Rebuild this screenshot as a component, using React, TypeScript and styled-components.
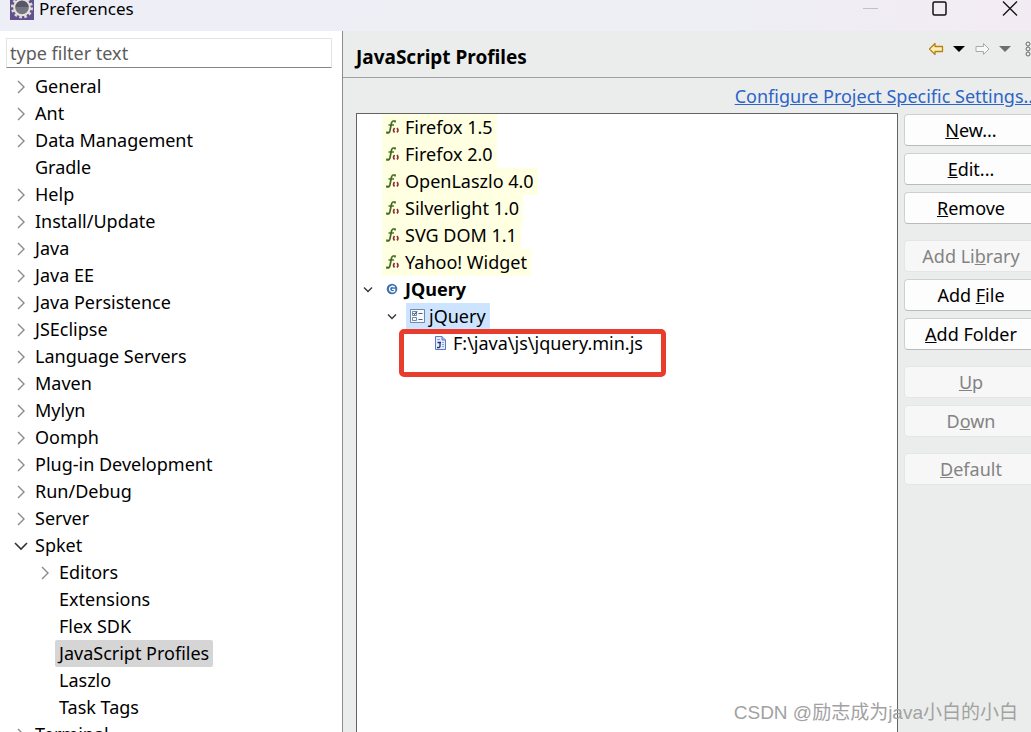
import React from 'react';
import styled, { createGlobalStyle } from 'styled-components';

const GlobalStyle = createGlobalStyle`
  *, *::before, *::after { box-sizing: border-box; }
  body { margin: 0; background: #ebedec; }
  body, button, input { font-family: "Noto Sans", "Noto Sans CJK SC", sans-serif; font-size: 18px; }
`;

const Window = styled.div`
  position: relative;
  display: flex;
  flex-direction: column;
  height: 100vh;
  overflow: hidden;
  background: #ebedec;
  color: #000;
`;

const TitleBar = styled.header`
  display: flex;
  flex: none;
  align-items: flex-start;
  height: 31px;
  padding: 0 13px 0 10px;
  overflow: hidden;
  background: linear-gradient(90deg, #eeeff6 0%, #eeeef5 70%, #f3ebf3 100%);
`;

const AppIcon = styled.svg`
  flex: none;
  width: 24px;
  height: 20px;
`;

const Title = styled.div`
  flex: 1;
  padding-left: 5px;
  font-size: 17px;
  line-height: 18px;
`;

const WindowControls = styled.div`
  display: flex;
  gap: 54px;
`;

const IconButton = styled.button`
  display: block;
  padding: 0;
  border: 0;
  background: none;
  svg { display: block; }
`;

const Body = styled.div`
  display: flex;
  flex: 1;
  min-height: 0;
`;

const Sidebar = styled.nav`
  flex: none;
  width: 343px;
  padding: 7px 10px 0 6px;
  overflow: hidden;
  border-right: 1px solid #8c8c8c;
  background: #fff;
`;

const Filter = styled.input`
  display: block;
  width: 100%;
  height: 30px;
  margin-bottom: 5px;
  padding: 0 3px;
  border: 1px solid #e3e3e3;
  border-bottom-color: #868686;
  border-radius: 1px;
  background: #fff;
  &::placeholder { color: #5c5c5c; opacity: 1; }
`;

const Tree = styled.ul`
  margin: 0;
  padding: 0;
  list-style: none;
`;

const Row = styled.li<{ $indent: number }>`
  display: flex;
  align-items: center;
  height: 27px;
  padding-left: ${(p) => p.$indent}px;
  white-space: nowrap;
`;

const Twisty = styled.svg`
  flex: none;
  width: 17px;
  height: 17px;
  fill: none;
`;

const Label = styled.span<{ $selected?: boolean }>`
  margin-left: 3px;
  padding: 0 4px;
  line-height: 27px;
  border-radius: 2px;
  background: ${(p) => (p.$selected ? '#d5d5d5' : 'transparent')};
`;

const Page = styled.main`
  display: flex;
  flex: 1;
  flex-direction: column;
  min-width: 0;
`;

const PageHeader = styled.div`
  display: flex;
  flex: none;
  align-items: center;
  justify-content: space-between;
  height: 47px;
  padding-left: 13px;
  border-bottom: 1px solid #a0a0a0;
`;

const Heading = styled.h1`
  margin: 0;
  padding-top: 6px;
  font-size: 19px;
  line-height: 27px;
`;

const HistoryTools = styled.div`
  display: flex;
  align-items: center;
  gap: 9px;
  padding-bottom: 10px;
  margin-right: -5px;
`;

const Content = styled.div`
  display: grid;
  flex: 1;
  grid-template-columns: minmax(0, 1fr) 134px;
  grid-template-rows: 35px minmax(0, 1fr);
  column-gap: 6px;
  min-height: 0;
  margin-right: -7px;
  padding-left: 13px;
`;

const SettingsLink = styled.a`
  grid-column: 1 / 3;
  justify-self: end;
  padding-top: 4px;
  color: #2c64c8;
  line-height: 28px;
  white-space: nowrap;
`;

const ProfileTree = styled(Tree)`
  border: 1px solid #646464;
  border-bottom: 0;
  background: #fff;
`;

const Profile = styled.span<{ $tone?: 'builtin' | 'selected' | 'bold' }>`
  display: flex;
  align-items: center;
  height: 27px;
  gap: 4px;
  margin-left: 7px;
  padding: 0 4px 2px;
  font-weight: ${(p) => (p.$tone === 'bold' ? 700 : 400)};
  background: ${(p) => (p.$tone === 'builtin' ? '#ffffe1' : p.$tone === 'selected' ? '#cce4ff' : 'transparent')};
`;

const FileRow = styled(Row)`
  position: relative;
`;

const Highlight = styled.div`
  position: absolute;
  top: -1px;
  left: 42px;
  width: 267px;
  height: 48px;
  border: 5px solid #e83d2c;
  border-radius: 5px;
`;

const Actions = styled.div`
  display: flex;
  flex-direction: column;
  gap: 16px;
  padding-top: 1px;
`;

const ActionGroup = styled.div`
  display: flex;
  flex-direction: column;
  gap: 7px;
`;

const ActionButton = styled.button`
  height: 32px;
  padding: 0;
  border: 1px solid #d0d0d0;
  border-bottom-color: #bababa;
  border-radius: 4px;
  background: #fdfdfd;
  color: #000;
  line-height: 28px;
  &:disabled {
    border-color: #e4e5e5;
    background: #f7f7f7;
    color: #838383;
  }
`;

const Watermark = styled.div`
  position: absolute;
  right: 13px;
  bottom: 5px;
  color: #a2a2a2;
  font-family: "Liberation Sans", "Noto Sans CJK SC", sans-serif;
  font-size: 19px;
  line-height: 28px;
`;

type TreeItem = { name: string; state?: 'open' | 'closed'; depth?: number; selected?: boolean };

const categories: TreeItem[] = [
  { name: 'General', state: 'closed' },
  { name: 'Ant', state: 'closed' },
  { name: 'Data Management', state: 'closed' },
  { name: 'Gradle' },
  { name: 'Help', state: 'closed' },
  { name: 'Install/Update', state: 'closed' },
  { name: 'Java', state: 'closed' },
  { name: 'Java EE', state: 'closed' },
  { name: 'Java Persistence', state: 'closed' },
  { name: 'JSEclipse', state: 'closed' },
  { name: 'Language Servers', state: 'closed' },
  { name: 'Maven', state: 'closed' },
  { name: 'Mylyn', state: 'closed' },
  { name: 'Oomph', state: 'closed' },
  { name: 'Plug-in Development', state: 'closed' },
  { name: 'Run/Debug', state: 'closed' },
  { name: 'Server', state: 'closed' },
  { name: 'Spket', state: 'open' },
  { name: 'Editors', state: 'closed', depth: 1 },
  { name: 'Extensions', depth: 1 },
  { name: 'Flex SDK', depth: 1 },
  { name: 'JavaScript Profiles', depth: 1, selected: true },
  { name: 'Laszlo', depth: 1 },
  { name: 'Task Tags', depth: 1 },
  { name: 'Terminal', state: 'closed' },
];

const builtins = ['Firefox 1.5', 'Firefox 2.0', 'OpenLaszlo 4.0', 'Silverlight 1.0', 'SVG DOM 1.1', 'Yahoo! Widget'];

type Action = { text: string; key: number; disabled?: boolean };

const actionGroups: Action[][] = [
  [{ text: 'New...', key: 0 }, { text: 'Edit...', key: 0 }, { text: 'Remove', key: 0 }],
  [{ text: 'Add Library', key: 6, disabled: true }, { text: 'Add File', key: 4 }, { text: 'Add Folder', key: 0 }],
  [{ text: 'Up', key: 0, disabled: true }, { text: 'Down', key: 1, disabled: true }],
  [{ text: 'Default', key: 0, disabled: true }],
];

const TreeArrow = ({ state, small }: { state?: 'open' | 'closed'; small?: boolean }) => (
  <Twisty viewBox="0 0 17 17">
    {state === 'closed' && <path d="M7 3l6 6-6 6" stroke="#8a8a8a" strokeWidth="1.4" />}
    {state === 'open' && !small && <path d="M4 6l6 6 6-6" stroke="#333" strokeWidth="1.6" />}
    {state === 'open' && small && <path d="M6 6.500l4 4 4-4" stroke="#333" strokeWidth="1.3" />}
  </Twisty>
);

const FunctionIcon = () => (
  <svg width="15" height="16" viewBox="0 0 15 16" fill="none">
    <path d="M9 3.500V2H7.200C6 2 5.700 3.200 5.300 5L4 11.500C3.600 13.200 3 14.200 1 14v-1.500" stroke="#3f6b1c" strokeWidth="1.700" />
    <path d="M2.500 6h5.500" stroke="#3f6b1c" strokeWidth="1.400" />
    <path d="M8.500 9q-2 2.300 0 4.600M11 9q2 2.300 0 4.600" stroke="#8c3030" strokeWidth="1.600" />
  </svg>
);

const GroupIcon = () => (
  <svg width="15" height="16" viewBox="0 0 15 16" fill="none">
    <circle cx="6" cy="8" r="5.300" fill="#3f73b0" />
    <path d="M8.600 6.300C7 4.500 3.500 5 3.500 8s3.500 3.500 5.100 2V8.300H6" stroke="#fff" strokeWidth="1.300" />
  </svg>
);

const LibraryIcon = () => (
  <svg width="15" height="16" viewBox="0 0 15 16" fill="none" stroke="#7188a8">
    <path d="M.5 1.500h14v13H.500z" fill="#f6faff" />
    <path d="M2.500 3.500h4v4h-4zM2.500 9.500h4v3h-4z" />
    <path d="M8.500 5.500h4M8.500 11.500h4" stroke="#4a5f80" />
    <path d="M3.500 5l1 1.500 2.500-3" stroke="#333" />
  </svg>
);

const ScriptIcon = () => (
  <svg width="15" height="16" viewBox="0 0 15 16" fill="none">
    <path d="M1.500 1.500h6.500l3.500 3.500v9.500h-10z" fill="#e4ecff" stroke="#5b78c8" />
    <path d="M8 1.500v3.500h3.500" fill="#a9bbf0" stroke="#5b78c8" />
    <path d="M3 4.500h3M8 7.500h2M8 9.500h2M8 11.500h2" stroke="#8aa0e0" />
    <path d="M6 7v4q0 2-3 1.500M3.500 7.500H7" stroke="#26315c" strokeWidth="1.300" />
  </svg>
);

const ArrowIcon = ({ forward }: { forward?: boolean }) => (
  <svg width="16" height="14" viewBox="0 0 16 14" strokeLinejoin="round">
    {forward ? (
      <path d="M15 7L9.500 1.500V4.500H2v5h7.500v3z" fill="#f7f7f7" stroke="#aaa" />
    ) : (
      <path d="M1.500 7L7 1.500V4.500h7.500v5H7v3z" fill="#fff0b8" stroke="#b98018" strokeWidth="1.300" />
    )}
  </svg>
);

const CaretIcon = ({ color }: { color: string }) => (
  <svg width="12" height="8" viewBox="0 0 12 8"><path d="M0 1h12L6 7z" fill={color} /></svg>
);

export default function App() {
  return (
    <Window>
      <GlobalStyle />
      <TitleBar>
        <AppIcon viewBox="0 0 24 20">
          <path d="M0 0h24v20H0z" fill="#62518f" />
          <circle cx="12" cy="7.500" r="9.500" fill="none" stroke="#dedbd6" strokeWidth="3" strokeDasharray="2.600 2.374" />
          <circle cx="12" cy="7.500" r="7.800" fill="#77757f" stroke="#e6e3dc" strokeWidth="2" />
          <path d="M5.500 7a6.500 6.500 0 0 1 13 0z" fill="#5a5868" />
        </AppIcon>
        <Title>Preferences</Title>
        <WindowControls>
          <IconButton aria-label="Minimize"><svg width="16" height="18"><path d="M1 8.500h15" stroke="#c4c0c4" /></svg></IconButton>
          <IconButton aria-label="Maximize"><svg width="16" height="18"><rect x="1" y="2" width="13" height="13" rx="1.500" fill="none" stroke="#111" strokeWidth="1.500" /></svg></IconButton>
          <IconButton aria-label="Close"><svg width="16" height="18"><path d="M1 1.500l14 14M15 1.500l-14 14" stroke="#111" strokeWidth="1.300" /></svg></IconButton>
        </WindowControls>
      </TitleBar>
      <Body>
        <Sidebar>
          <Filter type="text" placeholder="type filter text" aria-label="Filter preferences" />
          <Tree>
            {categories.map((item) => (
              <Row key={item.name} $indent={(item.depth ?? 0) * 24 + 5}>
                <TreeArrow state={item.state} />
                <Label $selected={item.selected}>{item.name}</Label>
              </Row>
            ))}
          </Tree>
        </Sidebar>
        <Page>
          <PageHeader>
            <Heading>JavaScript Profiles</Heading>
            <HistoryTools>
              <IconButton aria-label="Back"><ArrowIcon /></IconButton>
              <IconButton aria-label="Back history"><CaretIcon color="#000" /></IconButton>
              <IconButton aria-label="Forward"><ArrowIcon forward /></IconButton>
              <IconButton aria-label="Forward history"><CaretIcon color="#6e6e6e" /></IconButton>
              <IconButton aria-label="Menu">
                <svg width="16" height="16" fill="none" stroke="#666"><circle cx="8" cy="3" r="2" /><circle cx="8" cy="8" r="2" /><circle cx="8" cy="13" r="2" /></svg>
              </IconButton>
            </HistoryTools>
          </PageHeader>
          <Content>
            <SettingsLink href="#project-settings">Configure Project Specific Settings...</SettingsLink>
            <ProfileTree>
              {builtins.map((name) => (
                <Row key={name} $indent={18}>
                  <Profile $tone="builtin"><FunctionIcon />{name}</Profile>
                </Row>
              ))}
              <Row $indent={1}>
                <TreeArrow state="open" small />
                <Profile $tone="bold"><GroupIcon />JQuery</Profile>
              </Row>
              <Row $indent={25}>
                <TreeArrow state="open" small />
                <Profile $tone="selected"><LibraryIcon />jQuery</Profile>
              </Row>
              <FileRow $indent={66}>
                <Profile><ScriptIcon />F:\java\js\jquery.min.js</Profile>
                <Highlight />
              </FileRow>
            </ProfileTree>
            <Actions>
              {actionGroups.map((group) => (
                <ActionGroup key={group[0].text}>
                  {group.map(({ text, key, disabled }) => (
                    <ActionButton key={text} disabled={disabled}>
                      {text.slice(0, key)}<u>{text[key]}</u>{text.slice(key + 1)}
                    </ActionButton>
                  ))}
                </ActionGroup>
              ))}
            </Actions>
          </Content>
        </Page>
      </Body>
      <Watermark>CSDN @励志成为java小白的小白</Watermark>
    </Window>
  );
}
